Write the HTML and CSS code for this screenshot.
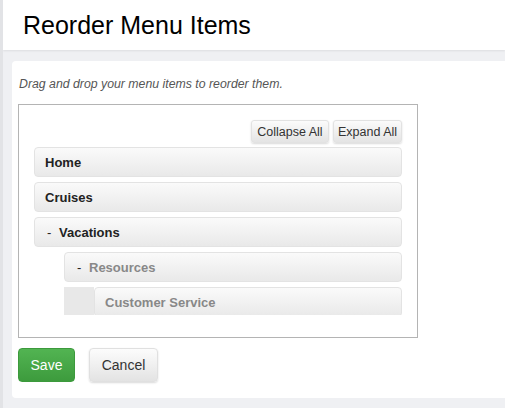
FILE: index.html
```html
<!DOCTYPE html>
<html>
<head>
<meta name="viewport" content="width=device-width, initial-scale=1.0"/>
<link rel="stylesheet" href="styles.css">
</head>
<body>

<div class="pageHeader">
    <h1>Reorder Menu Items</h1>
</div>

<div class="panel">
    <p class="hint">Drag and drop your menu items to reorder them.</p>

    <div class="menuBox">
        <div class="treeTools">
            <button class="smallBtn collapseBtn">Collapse All</button>
            <button class="smallBtn expandBtn">Expand All</button>
        </div>
        <div class="treeScroll">
            <ol class="menuTree">
                <li><div class="handle">Home</div></li>
                <li><div class="handle">Cruises</div></li>
                <li>
                    <div class="handle"><span class="toggle">-</span>Vacations</div>
                    <ol class="menuTree sub">
                        <li>
                            <div class="handle muted"><span class="toggle">-</span>Resources</div>
                            <ol class="menuTree sub strip">
                                <li><div class="handle muted">Customer Service</div></li>
                            </ol>
                        </li>
                    </ol>
                </li>
            </ol>
        </div>
    </div>

    <div class="actions">
        <button class="btn btnSave">Save</button>
        <button class="btn btnCancel">Cancel</button>
    </div>
</div>

</body>
</html>
```

FILE: styles.css
```css
body {
    margin: 0;
    background-color: #eff0f3;
    border-left: 3px solid #e2e3e6;
    font-family: "Liberation Sans", Arial, sans-serif;
    height: 408px;
    box-sizing: border-box;
    overflow: hidden;
}

.pageHeader {
    background: #ffffff;
    height: 50px;
    box-shadow: 0 1px 2px rgba(0, 0, 0, 0.08);
    padding-left: 20px;
}
.pageHeader h1 {
    margin: 0;
    font-size: 25px;
    font-weight: normal;
    color: #000;
    line-height: 50px;
}

.panel {
    background: #ffffff;
    margin: 11px 0 0 9px;
    border-radius: 4px 0 0 4px;
    padding: 16px 0 16px 6px;
}

.hint {
    margin: 0 0 13px 1px;
    font-size: 12.3px;
    font-style: italic;
    color: #555;
    line-height: 14px;
}

.menuBox {
    width: 400px;
    border: 1px solid #b4b4b4;
    padding: 15px 15px 22px 15px;
    box-sizing: border-box;
}

.treeTools {
    display: flex;
    justify-content: flex-end;
    gap: 4px;
}

.smallBtn {
    font-family: "Liberation Sans", Arial, sans-serif;
    font-size: 12.5px;
    color: #333;
    height: 23px;
    padding: 0;
    border: 1px solid #e2e2e2;
    border-radius: 3px;
    background: linear-gradient(#fbfbfb, #e4e4e4);
    box-shadow: 0 1px 2px rgba(0, 0, 0, 0.15);
}
.collapseBtn {
    width: 78px;
}
.expandBtn {
    width: 69px;
}

.treeScroll {
    margin-top: 4px;
    height: 168px;
    overflow: hidden;
}

.menuTree {
    list-style: none;
    margin: 0;
    padding: 0;
}
.menuTree li {
    margin-bottom: 5px;
}
.menuTree.sub {
    margin-top: 5px;
    padding-left: 30px;
}
.menuTree.strip {
    background: linear-gradient(to right, #e8e8e8 30px, transparent 30px);
}

.handle {
    height: 30px;
    line-height: 30px;
    box-sizing: border-box;
    border: 1px solid #e3e3e3;
    border-radius: 4px;
    background: linear-gradient(#fafafa, #e9e9e9);
    padding-left: 10px;
    font-size: 13px;
    font-weight: bold;
    color: #222;
}
.handle.muted {
    color: #888;
}
.toggle {
    display: inline-block;
    width: 12px;
    padding-left: 2px;
    font-weight: normal;
    color: #222;
}

.actions {
    display: flex;
    gap: 14px;
    margin-top: 10px;
}

.btn {
    font-family: "Liberation Sans", Arial, sans-serif;
    font-size: 14px;
    height: 34px;
    border-radius: 4px;
    padding: 0;
}
.btnSave {
    color: #fff;
    width: 57px;
    border: 1px solid #3c9a3c;
    background: linear-gradient(#52b452, #3d9b3d);
}
.btnCancel {
    color: #333;
    width: 69px;
    border: 1px solid #e0e0e0;
    background: linear-gradient(#fcfcfc, #e3e3e3);
    box-shadow: 0 1px 2px rgba(0, 0, 0, 0.15);
}
```
